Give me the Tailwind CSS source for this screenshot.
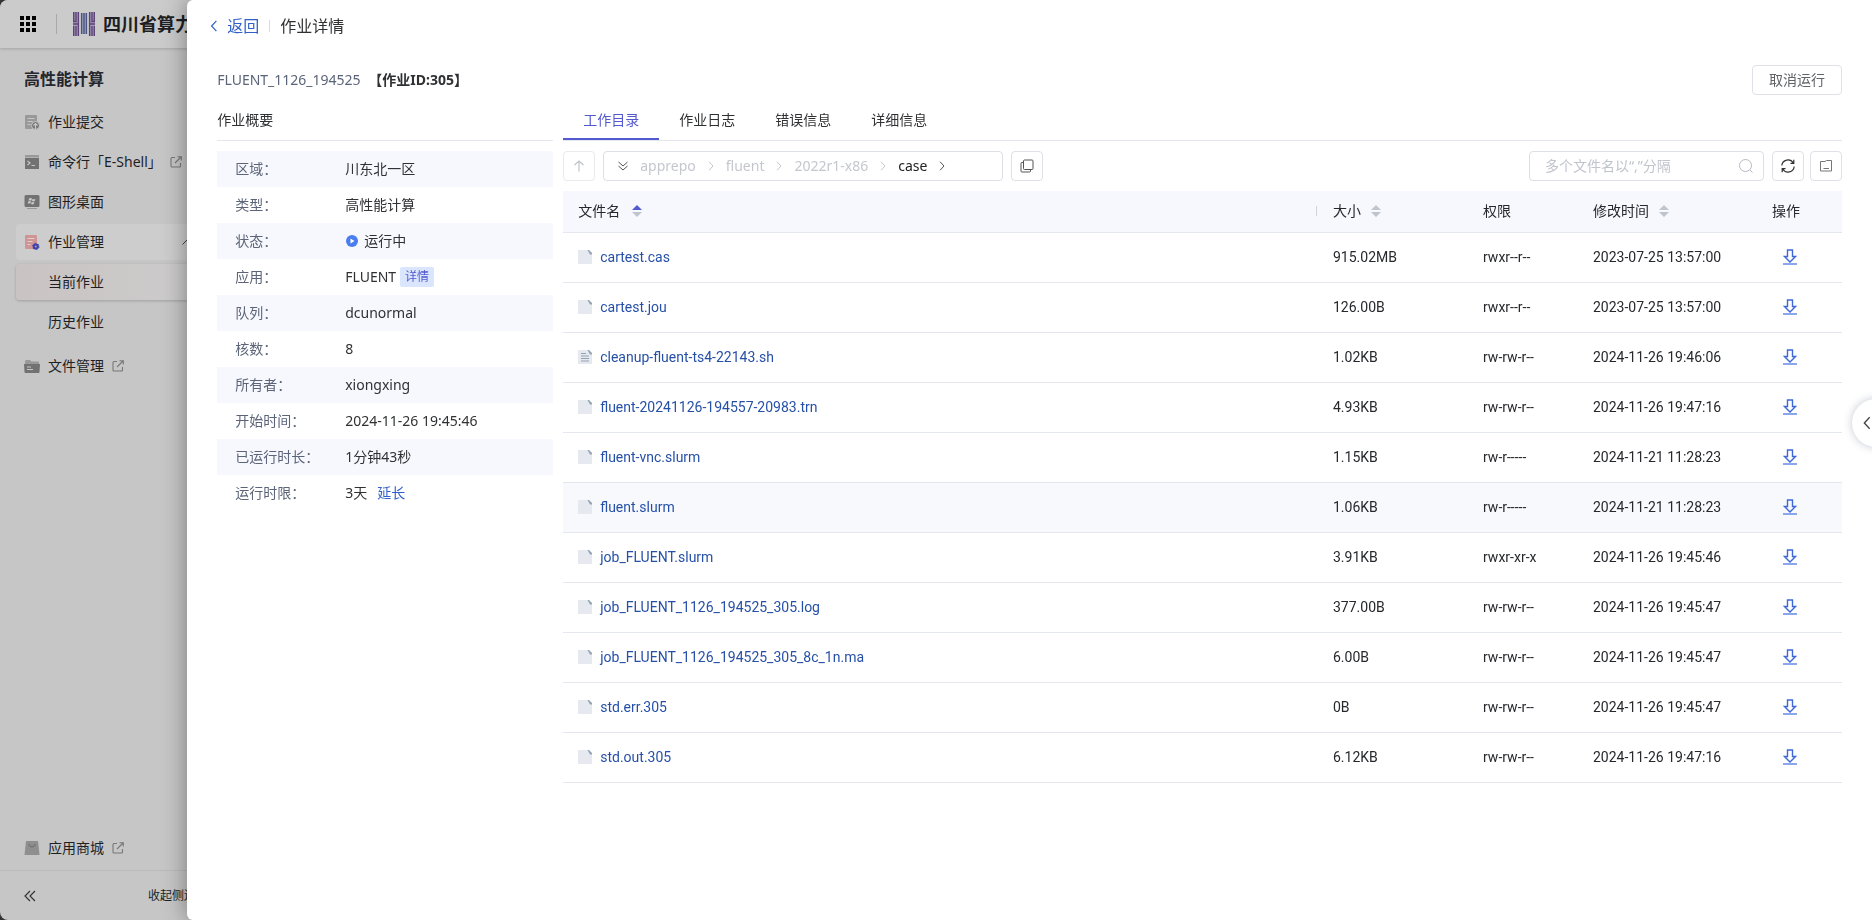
<!DOCTYPE html>
<html lang="zh-CN">
<head>
    <meta charset="UTF-8">
    <meta name="viewport" content="width=device-width, initial-scale=1.0">
    <title>作业详情 - 高性能计算</title>
    <script src="https://cdn.jsdelivr.net/npm/@tailwindcss/browser@4"></script>
    <style>
        body {
            font-family: 'Noto Sans', 'Noto Sans CJK SC', sans-serif;
        }
        .font-table {
            font-family: Roboto, 'Noto Sans CJK SC', sans-serif;
        }
    </style>
</head>
<body class="bg-[#333] text-sm leading-5 overflow-hidden">

    <!-- 图标定义 -->
    <svg class="hidden">
        <symbol id="i-file" viewBox="0 0 14 14">
            <path d="M0 0h9.500L14 4.500V14H0z" fill="#e6e9ef"/>
            <path d="M9.500 0H11l3 3v1.500h-2z" fill="#93a3b3"/>
        </symbol>
        <symbol id="i-file-text" viewBox="0 0 14 14">
            <path d="M0 0h9.500L14 4.500V14H0z" fill="#e6e9ef"/>
            <path d="M9.500 0H11l3 3v1.500h-2z" fill="#93a3b3"/>
            <path d="M3 3.500h5M3 6h8M3 8.500h8M3 11h8" stroke="#93a0b0" stroke-width="1"/>
        </symbol>
        <symbol id="i-download" viewBox="0 0 14 16">
            <path d="M4.500 1h5v6.500h3L7 13 1.500 7.500h3z" fill="none" stroke="#3f68d8" stroke-width="1.400"/>
            <path d="M0 15h14" stroke="#8aa6ec" stroke-width="2"/>
        </symbol>
        <symbol id="i-external" viewBox="0 0 12 12">
            <path d="M5 1.500H2a1 1 0 0 0-1 1V10a1 1 0 0 0 1 1h7.500a1 1 0 0 0 1-1V7M7.500 .7h3.800v3.800M11 1L5 7" fill="none" stroke="currentColor" stroke-width="1.100"/>
        </symbol>
        <symbol id="i-chevron" viewBox="0 0 6 10">
            <path d="M1 .7l4 4.300-4 4.300" fill="none" stroke="currentColor"/>
        </symbol>
    </svg>

    <!-- 底层页面 -->
    <div class="h-screen flex flex-col bg-[#c6c6c6] rounded-l-lg overflow-hidden text-[#1d1f24]">
        <header class="relative h-12 shrink-0 flex items-center pl-5 bg-[#cbcbcb] shadow-[0_1px_3px_rgba(0,0,0,0.18)]">
            <svg class="w-4 h-4" viewBox="0 0 16 16" fill="#000">
                <path d="M0 0h4v4H0zM6 0h4v4H6zM12 0h4v4h-4zM0 6h4v4H0zM6 6h4v4H6zM12 6h4v4h-4zM0 12h4v4H0zM6 12h4v4H6zM12 12h4v4h-4z"/>
            </svg>
            <span class="w-px h-5 bg-[#a9a9a9] ml-5"></span>
            <svg class="w-[22px] h-6 ml-4" viewBox="0 0 22 24" fill="none" stroke="#5d4478" stroke-width="1.400">
                <path d="M0 0h6v24H0zM16 0h6v24h-6z" fill="#a59bb4" stroke="none"/>
                <path d="M8 1h6v21H8z" fill="#a2a6bd" stroke="none"/>
                <path d="M.7 0v9M3 0v9.500H0M5.400 0v12H0M.7 14v10M3 14v10M5.400 12v12"/>
                <path d="M8.600 1v21M11 1v21M13.400 1v21" stroke="#4b5584"/>
                <path d="M16.600 0v12H22M19 0v9.500h3M21.300 0v9M16.600 12v12M19 14v10M21.300 14v10"/>
            </svg>
            <span class="ml-2 text-lg font-bold whitespace-nowrap">四川省算力</span>
        </header>

        <nav class="flex-1 flex flex-col w-[220px] px-4">
            <h2 class="mt-5 mb-3 pl-2 text-base leading-[22px] font-bold text-[#24272e]">高性能计算</h2>
            <a href="#" class="h-10 px-2 flex items-center gap-2">
                <svg class="w-4 h-4" viewBox="0 0 16 16">
                    <path d="M2 1h10a1 1 0 0 1 1 1v13H2a1 1 0 0 1-1-1V2a1 1 0 0 1 1-1z" fill="#999"/>
                    <path d="M3.500 4.500h7M3.500 7.500h5M3.500 10.500h3" stroke="#c6c6c6"/>
                    <circle cx="11.500" cy="11.500" r="4" fill="#757575" stroke="#c6c6c6"/>
                    <path d="M11.500 15v-5.500M9.500 11.500l2-2 2 2" stroke="#c6c6c6" fill="none" stroke-width="1.200"/>
                </svg>
                作业提交
            </a>
            <a href="#" class="h-10 px-2 flex items-center gap-2 whitespace-nowrap">
                <svg class="w-4 h-4 shrink-0" viewBox="0 0 16 16">
                    <path d="M1 1h14v2.500H1z" fill="#999"/>
                    <path d="M1 4h14v11H1z" fill="#727272"/>
                    <path d="M3.500 7l2.500 2-2.500 2M7.500 11.500h3.500" stroke="#c6c6c6" fill="none" stroke-width="1.200"/>
                </svg>
                命令行「E-Shell」
                <svg class="w-3 h-3 shrink-0 text-[#777]"><use href="#i-external"/></svg>
            </a>
            <a href="#" class="h-10 px-2 flex items-center gap-2">
                <svg class="w-4 h-4" viewBox="0 0 16 16">
                    <rect x=".5" y="1" width="15" height="12" rx="1.500" fill="#727272"/>
                    <path d="M3 14.500h10" stroke="#999"/>
                    <path d="M5 4.500q1.500-1 3 0l-.7 2.200q-1.400-.8-2.800 0zM8.500 4.700q1.500 1 3 0l-.7 2.300q-1.400.8-2.800 0zM4.300 7.500q1.500-.8 2.700 0l-.7 2.200q-1.300-.8-2.700 0zM7.700 7.700q1.500 1 2.800 0l-.7 2.300q-1.400.8-2.700 0z" fill="#c9c9c9"/>
                </svg>
                图形桌面
            </a>
            <a href="#" class="h-9 my-0.5 px-2 flex items-center gap-2 rounded bg-[#cdcdcd]">
                <svg class="w-4 h-4" viewBox="0 0 16 16">
                    <path d="M2 1h10a1 1 0 0 1 1 1v13H2a1 1 0 0 1-1-1V2a1 1 0 0 1 1-1z" fill="#cf9494"/>
                    <path d="M3.500 4.500h7M3.500 7.500h5M3.500 10.500h3" stroke="#e2cccc"/>
                    <circle cx="11.800" cy="12.500" r="2" fill="none" stroke="#3c43ad" stroke-width="2"/>
                    <circle cx="11.800" cy="12.500" r="3.200" fill="none" stroke="#3c43ad" stroke-dasharray="1.700 1.650"/>
                </svg>
                作业管理
                <svg class="w-2.5 h-1.5 ml-auto mr-1" viewBox="0 0 10 6"><path d="M.5 5.500L5 1l4.500 4.500" fill="none" stroke="#444"/></svg>
            </a>
            <a href="#" class="h-9 my-0.5 pl-8 flex items-center rounded bg-linear-to-r from-[#cac3c3] to-[#cccccc] shadow-[0_1px_3px_rgba(0,0,0,0.2)]">当前作业</a>
            <a href="#" class="h-10 pl-8 flex items-center">历史作业</a>
            <a href="#" class="h-10 mt-1 px-2 flex items-center gap-2">
                <svg class="w-4 h-4" viewBox="0 0 16 16">
                    <path d="M1 5V3a1 1 0 0 1 1-1h4l1.500 1.500H14a1 1 0 0 1 1 1V6H1z" fill="#999"/>
                    <path d="M0 6h16l-.5 8a1 1 0 0 1-1 1h-13a1 1 0 0 1-1-1z" fill="#727272"/>
                    <path d="M3 9h4M3 11.500h6" stroke="#c6c6c6"/>
                </svg>
                文件管理
                <svg class="w-3 h-3 text-[#777]"><use href="#i-external"/></svg>
            </a>
            <a href="#" class="h-10 mt-auto mb-0.5 px-2 flex items-center gap-2">
                <svg class="w-4 h-4" viewBox="0 0 16 16">
                    <path d="M2 1h12l1.500 14H.5z" fill="#8f8f8f"/>
                    <path d="M4.500 4q3.500 6 7 0" stroke="#6f6f6f" fill="none" stroke-width="1.200"/>
                </svg>
                应用商城
                <svg class="w-3 h-3 text-[#777]"><use href="#i-external"/></svg>
            </a>
        </nav>
        <button type="button" class="h-[50px] w-[220px] shrink-0 border-t border-[#bababa] flex items-center justify-between pl-6 pr-3">
            <svg class="w-3 h-3" viewBox="0 0 12 12"><path d="M6 1L1 6l5 5M11 1L6 6l5 5" fill="none" stroke="#333" stroke-width="1.200"/></svg>
            <span class="text-xs">收起侧边栏</span>
        </button>
    </div>

    <!-- 作业详情抽屉 -->
    <section class="fixed inset-y-0 right-0 w-[90%] px-[30px] bg-white rounded-l-md shadow-[0_0_24px_rgba(0,0,0,0.4)] text-[#303133]">
        <div class="h-[52px] -ml-2 flex items-center text-base">
            <a href="#" class="flex items-center gap-2 text-[#3160c8]">
                <svg class="w-2.5 h-3 rotate-180"><use href="#i-chevron"/></svg>
                返回
            </a>
            <span class="w-px h-3 mx-2.5 bg-[#d8dade]"></span>
            <h1>作业详情</h1>
        </div>

        <div class="mt-3 h-8 flex items-center justify-between">
            <p><span class="mr-1 text-[#5b6478]">FLUENT_1126_194525</span> <b>【作业ID:305】</b></p>
            <button type="button" class="w-[90px] h-[30px] border border-[#dfe1e6] rounded text-[#606266]">取消运行</button>
        </div>

        <div class="mt-1 flex gap-2.5">
            <!-- 概要 -->
            <div class="w-[336px] shrink-0">
                <h3 class="h-[41px] mb-2.5 flex items-center border-b border-[#e4e7ed]">作业概要</h3>
                <dl id="summary"></dl>
            </div>

            <!-- 文件列表 -->
            <div class="flex-1 min-w-0">
                <div class="h-[41px] mb-2.5 flex border-b border-[#e4e7ed]" role="tablist">
                    <button type="button" role="tab" class="w-24 pt-0.5 border-b-2 border-[#5359cf] text-[#5359cf]">工作目录</button>
                    <button type="button" role="tab" class="w-24 pt-0.5 border-b-2 border-transparent">作业日志</button>
                    <button type="button" role="tab" class="w-24 pt-0.5 border-b-2 border-transparent">错误信息</button>
                    <button type="button" role="tab" class="w-24 pt-0.5 border-b-2 border-transparent">详细信息</button>
                </div>

                <div class="flex gap-2">
                    <button type="button" aria-label="上一级" class="w-8 h-[30px] border border-[#e8eaee] rounded flex items-center justify-center">
                        <svg class="w-3 h-3" viewBox="0 0 12 12"><path d="M6 11.500V1M1.500 5L6 1l4.500 4" fill="none" stroke="#c0c4cc" stroke-width="1.200"/></svg>
                    </button>
                    <div class="w-[400px] h-[30px] px-3.5 border border-[#dcdfe6] rounded flex items-center gap-3 text-[#c4c7ce]">
                        <svg class="w-2.5 h-2.5" viewBox="0 0 10 10"><path d="M.5 1L5 5l4.500-4M.5 5L5 9l4.500-4" fill="none" stroke="#555"/></svg>
                        <a href="#">apprepo</a>
                        <svg class="w-1.5 h-2.5"><use href="#i-chevron"/></svg>
                        <a href="#">fluent</a>
                        <svg class="w-1.5 h-2.5"><use href="#i-chevron"/></svg>
                        <a href="#">2022r1-x86</a>
                        <svg class="w-1.5 h-2.5"><use href="#i-chevron"/></svg>
                        <a href="#" class="text-[#222]">case</a>
                        <svg class="w-1.5 h-2.5 text-[#555]"><use href="#i-chevron"/></svg>
                    </div>
                    <button type="button" aria-label="复制路径" class="w-8 h-[30px] border border-[#dfe1e6] rounded flex items-center justify-center">
                        <svg class="w-3.5 h-3.5" viewBox="0 0 14 14" fill="none" stroke="#555">
                            <rect x="3.500" y="1" width="9.500" height="9.500" rx="1"/>
                            <path d="M3.500 3.500H2a1 1 0 0 0-1 1V12a1 1 0 0 0 1 1h7.500a1 1 0 0 0 1-1v-1.500"/>
                        </svg>
                    </button>
                    <label class="ml-auto w-[235px] h-[30px] pl-[15px] pr-2.5 border border-[#dcdfe6] rounded flex items-center">
                        <input type="text" aria-label="搜索文件名" placeholder="多个文件名以“,”分隔" class="flex-1 min-w-0 outline-none placeholder:text-[#c0c4cc]">
                        <svg class="w-3.5 h-3.5" viewBox="0 0 14 14" fill="none" stroke="#b4b8c0"><circle cx="6.500" cy="6.500" r="6"/><path d="M11 11l2.500 2.500"/></svg>
                    </label>
                    <div class="flex gap-1.5">
                        <button type="button" aria-label="刷新" class="w-8 h-[30px] border border-[#dfe1e6] rounded flex items-center justify-center">
                            <svg class="w-3.5 h-3.5" viewBox="0 0 14 14" fill="none" stroke="#333" stroke-width="1.200">
                                <path d="M.8 6.500A6.200 6.200 0 0 1 12.300 4M13.200 7.500A6.200 6.200 0 0 1 1.700 10M12.800 .8V4.300H9.500M1.200 13.200V9.700H4.500"/>
                            </svg>
                        </button>
                        <button type="button" aria-label="新建文件夹" class="w-8 h-[30px] border border-[#dfe1e6] rounded flex items-center justify-center">
                            <svg class="w-3 h-3" viewBox="0 0 12 12" fill="none" stroke="#777"><path d="M.5 1.500h4.500l1.500-1h5v10.500H.5zM3.500 8.500h5.500"/></svg>
                        </button>
                    </div>
                </div>

                <table class="font-table mt-2.5 w-full table-fixed text-left text-[#26282c]">
                    <colgroup>
                        <col>
                        <col class="w-[150px]">
                        <col class="w-[110px]">
                        <col class="w-[179px]">
                        <col class="w-[86px]">
                    </colgroup>
                    <thead>
                        <tr class="h-[41px] bg-[#f7f8fd] border-b border-[#e4e7ed] *:font-normal">
                            <th class="pl-[15px]">
                                <div class="flex items-center gap-3">
                                    文件名
                                    <svg class="w-2.5 h-3" viewBox="0 0 10 12"><path d="M0 5l5-5 5 5z" fill="#5359cf"/><path d="M0 7l5 5 5-5z" fill="#c0c4cc"/></svg>
                                    <span class="ml-auto w-px h-2.5 bg-[#d0d3da]"></span>
                                </div>
                            </th>
                            <th class="pl-4">
                                <div class="flex items-center gap-2.5">
                                    大小
                                    <svg class="w-2.5 h-3" viewBox="0 0 10 12"><path d="M0 5l5-5 5 5zM0 7l5 5 5-5z" fill="#c0c4cc"/></svg>
                                </div>
                            </th>
                            <th class="pl-4">权限</th>
                            <th class="pl-4">
                                <div class="flex items-center gap-2.5">
                                    修改时间
                                    <svg class="w-2.5 h-3" viewBox="0 0 10 12"><path d="M0 5l5-5 5 5zM0 7l5 5 5-5z" fill="#c0c4cc"/></svg>
                                </div>
                            </th>
                            <th class="pl-4">操作</th>
                        </tr>
                    </thead>
                    <tbody id="files"></tbody>
                </table>
            </div>
        </div>
    </section>

    <!-- 右侧悬浮展开按钮 -->
    <button type="button" aria-label="展开" class="fixed top-[399px] -right-7 w-12 h-12 pl-[11px] bg-white rounded-full shadow-[0_0_8px_rgba(60,70,110,0.3)] text-[#444] flex items-center">
        <svg class="w-2 h-3.5 rotate-180"><use href="#i-chevron"/></svg>
    </button>

    <script>
        // 作业概要
        const summary = [
            ['区域', '川东北一区'],
            ['类型', '高性能计算'],
            ['状态', '<svg class="w-3 h-3 ml-px mr-1.5" viewBox="0 0 12 12"><circle cx="6" cy="6" r="6" fill="#4a7df0"/><path d="M4.500 3.500v5L8.500 6z" fill="#fff"/></svg>运行中'],
            ['应用', 'FLUENT<button type="button" class="ml-1 h-5 px-[5px] rounded-xs bg-[#d9e6fd] text-xs text-[#5359cf]">详情</button>'],
            ['队列', 'dcunormal'],
            ['核数', '8'],
            ['所有者', 'xiongxing'],
            ['开始时间', '2024-11-26 19:45:46'],
            ['已运行时长', '1分钟43秒'],
            ['运行时限', '3天<a href="#" class="ml-2.5 text-[#3160c8]">延长</a>'],
        ];

        // 文件列表：名称、大小、权限、修改时间
        const files = [
            ['cartest.cas', '915.02MB', 'rwxr--r--', '2023-07-25 13:57:00'],
            ['cartest.jou', '126.00B', 'rwxr--r--', '2023-07-25 13:57:00'],
            ['cleanup-fluent-ts4-22143.sh', '1.02KB', 'rw-rw-r--', '2024-11-26 19:46:06'],
            ['fluent-20241126-194557-20983.trn', '4.93KB', 'rw-rw-r--', '2024-11-26 19:47:16'],
            ['fluent-vnc.slurm', '1.15KB', 'rw-r-----', '2024-11-21 11:28:23'],
            ['fluent.slurm', '1.06KB', 'rw-r-----', '2024-11-21 11:28:23'],
            ['job_FLUENT.slurm', '3.91KB', 'rwxr-xr-x', '2024-11-26 19:45:46'],
            ['job_FLUENT_1126_194525_305.log', '377.00B', 'rw-rw-r--', '2024-11-26 19:45:47'],
            ['job_FLUENT_1126_194525_305_8c_1n.ma', '6.00B', 'rw-rw-r--', '2024-11-26 19:45:47'],
            ['std.err.305', '0B', 'rw-rw-r--', '2024-11-26 19:45:47'],
            ['std.out.305', '6.12KB', 'rw-rw-r--', '2024-11-26 19:47:16'],
        ];
        const activeFile = 'fluent.slurm';

        document.getElementById('summary').innerHTML = summary.map(([label, value]) => `
            <div class="h-9 pl-[18px] flex items-center odd:bg-[#f7f8fd]">
                <dt class="w-[110px] text-[#5b6478]">${label}：</dt>
                <dd class="flex items-center">${value}</dd>
            </div>
        `).join('');

        document.getElementById('files').innerHTML = files.map(([name, size, mode, time]) => `
            <tr class="h-[50px] border-b border-[#e4e7ed] ${name === activeFile ? 'bg-[#f7f9fd]' : ''}">
                <td class="pl-[15px]">
                    <div class="flex items-center gap-2">
                        <svg class="w-3.5 h-3.5"><use href="${name.endsWith('.sh') ? '#i-file-text' : '#i-file'}"/></svg>
                        <a href="#" class="text-[#2650a8]">${name}</a>
                    </div>
                </td>
                <td class="pl-4">${size}</td>
                <td class="pl-4">${mode}</td>
                <td class="pl-4">${time}</td>
                <td class="pl-[27px]">
                    <button type="button" aria-label="下载" class="block"><svg class="w-3.5 h-4"><use href="#i-download"/></svg></button>
                </td>
            </tr>
        `).join('');
    </script>
</body>
</html>
